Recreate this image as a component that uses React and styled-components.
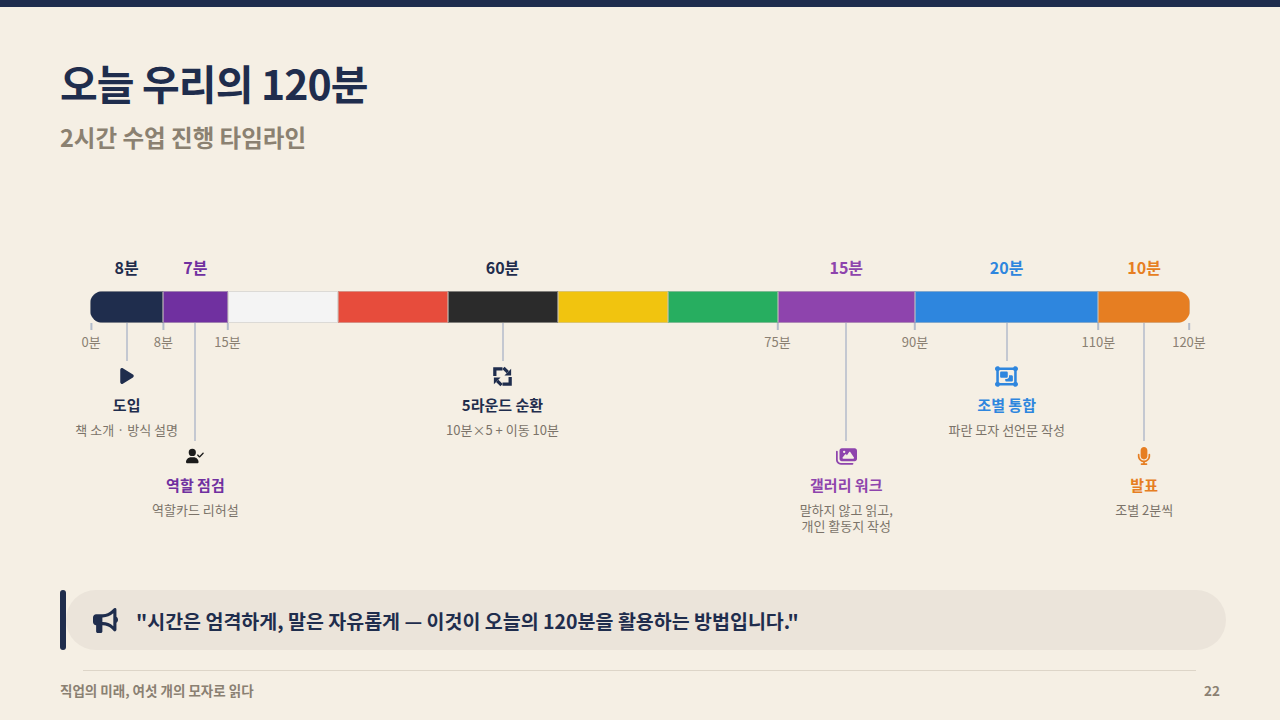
import React from 'react'
import styled, { createGlobalStyle } from 'styled-components'
import { FaPlay, FaUserCheck, FaImages, FaObjectGroup, FaMicrophone, FaBullhorn } from 'react-icons/fa6'

const NAVY = '#1f2d4d'
const MUTED = '#8a8072'
const TOTAL = 120

const GlobalStyle = createGlobalStyle`
  html, body {
    margin: 0;
    padding: 0;
    background: #f5efe4;
  }
  body {
    font-family: "Noto Sans CJK KR", "Noto Sans", sans-serif;
  }
`

const Slide = styled.div`
  width: 1280px;
  height: 720px;
  overflow: hidden;
  display: flex;
  flex-direction: column;
  background: #f5efe4;
  border-top: 7px solid ${NAVY};
  box-sizing: border-box;
`

const Header = styled.header`
  padding: 50px 60px 0;
  display: flex;
  flex-direction: column;
  gap: 14px;
`

const Title = styled.h1`
  margin: 0;
  font-size: 41px;
  line-height: 50px;
  font-weight: 700;
  letter-spacing: -0.9px;
  color: ${NAVY};
`

const Subtitle = styled.h2`
  margin: 0;
  font-size: 23.5px;
  line-height: 32px;
  font-weight: 700;
  color: #8b8171;
`

const Timeline = styled.section`
  width: 1100px;
  margin: 103px 0 0 90px;
  display: flex;
  flex-direction: column;
`

const Row = styled.div`
  display: flex;
`

const Cell = styled.div`
  flex: ${p => p.$grow} 1 0;
  min-width: 0;
  display: flex;
  flex-direction: column;
  align-items: center;
`

const DurationLabel = styled.div`
  font-size: 16px;
  line-height: 22px;
  font-weight: 700;
  color: ${p => p.$color};
  white-space: nowrap;
`

const Bar = styled.div`
  display: flex;
  height: 32px;
  margin-top: 13px;
  border-radius: 13px;
  overflow: hidden;
`

const Segment = styled.div`
  flex: ${p => p.$grow} 1 0;
  min-width: 0;
  background: ${p => p.$color};
  box-shadow: inset 0 0 0 1px rgba(200, 196, 190, 0.55);
`

const Below = styled.div`
  position: relative;
`

const Axis = styled.div`
  position: absolute;
  top: 0;
  left: 0;
  right: 0;
  height: 30px;
`

const Tick = styled.div`
  position: absolute;
  top: 0;
  transform: translateX(-50%);
  display: flex;
  flex-direction: column;
  align-items: center;
`

const TickMark = styled.div`
  width: 2px;
  height: 7px;
  background: #b3bccb;
`

const TickLabel = styled.div`
  margin-top: 4px;
  font-size: 13px;
  line-height: 16px;
  color: ${MUTED};
  white-space: nowrap;
`

const Connector = styled.div`
  width: 2px;
  height: ${p => (p.$deep ? 118 : 38)}px;
  background: #c4c8d1;
`

const IconBox = styled.div`
  height: 22px;
  margin-top: 4px;
  display: flex;
  align-items: center;
  justify-content: center;
  color: ${p => p.$color};
  font-size: ${p => p.$size}px;
`

const StopTitle = styled.div`
  margin-top: 8px;
  font-size: 15px;
  line-height: 20px;
  font-weight: 700;
  color: ${p => p.$color};
  white-space: nowrap;
`

const StopDesc = styled.div`
  margin-top: 7px;
  font-size: 13px;
  line-height: 16px;
  color: #7b7369;
  text-align: center;
  white-space: nowrap;
`

const QuoteRow = styled.div`
  display: flex;
  height: 60px;
  margin: 56px 54px 0 60px;
`

const AccentBar = styled.div`
  width: 6px;
  border-radius: 3px;
  background: ${NAVY};
`

const QuoteBox = styled.div`
  flex: 1;
  display: flex;
  align-items: center;
  gap: 18px;
  padding-left: 27px;
  border-radius: 30px;
  background: #ebe4da;
  color: ${NAVY};
`

const QuoteText = styled.p`
  margin: 0;
  font-size: 19.5px;
  font-weight: 700;
`

const Footer = styled.footer`
  margin-top: 20px;
  padding: 0 60px;
  display: flex;
  flex-direction: column;
`

const FooterRule = styled.div`
  height: 1px;
  margin: 0 24px 0 23px;
  background: #ddd5c8;
`

const FooterRow = styled.div`
  margin-top: 10px;
  display: flex;
  justify-content: space-between;
  font-size: 13.5px;
  line-height: 18px;
  font-weight: 700;
  color: ${MUTED};
`

const RotateIcon = () => (
  <svg width="23" height="23" viewBox="0 0 24 24" fill="none">
    {[0, 180].map(r => (
      <g key={r} transform={`rotate(${r} 12 12)`}>
        <path d="M4 11.5V4H12" stroke={NAVY} strokeWidth="3.4" />
        <path d="M13 3L17.5 7.5" stroke={NAVY} strokeWidth="3.4" />
        <path d="M21 11V4L14 11Z" fill={NAVY} />
      </g>
    ))}
  </svg>
)

const segments = [
  { min: 8, color: NAVY },
  { min: 7, color: '#7030a0' },
  { min: 12, color: '#f4f4f4' },
  { min: 12, color: '#e74c3c' },
  { min: 12, color: '#2b2b2b' },
  { min: 12, color: '#f1c40f' },
  { min: 12, color: '#27ae60' },
  { min: 15, color: '#8e44ad' },
  { min: 20, color: '#2e86de' },
  { min: 10, color: '#e67e22' },
]

const ticks = [0, 8, 15, 75, 90, 110, 120]

const phases = [
  { min: 8, label: '8분', color: NAVY, icon: <FaPlay />, iconColor: NAVY, size: 18, title: '도입', desc: ['책 소개 · 방식 설명'] },
  { min: 7, label: '7분', color: '#7030a0', icon: <FaUserCheck />, iconColor: '#1b1b1b', size: 18, title: '역할 점검', desc: ['역할카드 리허설'], deep: true },
  { min: 60, label: '60분', color: NAVY, icon: <RotateIcon />, iconColor: NAVY, size: 22, title: '5라운드 순환', desc: ['10분×5 + 이동 10분'] },
  { min: 15, label: '15분', color: '#8e44ad', icon: <FaImages />, iconColor: '#8e44ad', size: 21, title: '갤러리 워크', desc: ['말하지 않고 읽고,', '개인 활동지 작성'], deep: true },
  { min: 20, label: '20분', color: '#2e86de', icon: <FaObjectGroup />, iconColor: '#2e86de', size: 23, title: '조별 통합', desc: ['파란 모자 선언문 작성'] },
  { min: 10, label: '10분', color: '#e67e22', icon: <FaMicrophone />, iconColor: '#e67e22', size: 18, title: '발표', desc: ['조별 2분씩'], deep: true },
]

const App = () => {
  return (
    <>
      <GlobalStyle />
      <Slide>
        <Header>
          <Title>오늘 우리의 120분</Title>
          <Subtitle>2시간 수업 진행 타임라인</Subtitle>
        </Header>

        <Timeline>
          <Row>
            {phases.map(p => (
              <Cell key={p.title} $grow={p.min}>
                <DurationLabel $color={p.color}>{p.label}</DurationLabel>
              </Cell>
            ))}
          </Row>

          <Bar>
            {segments.map((s, i) => (
              <Segment key={i} $grow={s.min} $color={s.color} />
            ))}
          </Bar>

          <Below>
            <Axis>
              {ticks.map(t => (
                <Tick key={t} style={{ left: `calc(${(t / TOTAL) * 100}% + ${t === 0 ? 1 : t === TOTAL ? -1 : 0}px)` }}>
                  <TickMark />
                  <TickLabel>{t}분</TickLabel>
                </Tick>
              ))}
            </Axis>
            <Row>
              {phases.map(p => (
                <Cell key={p.title} $grow={p.min}>
                  <Connector $deep={p.deep} />
                  <IconBox $color={p.iconColor} $size={p.size}>{p.icon}</IconBox>
                  <StopTitle $color={p.color}>{p.title}</StopTitle>
                  <StopDesc>
                    {p.desc.map(line => <div key={line}>{line}</div>)}
                  </StopDesc>
                </Cell>
              ))}
            </Row>
          </Below>
        </Timeline>

        <QuoteRow>
          <AccentBar />
          <QuoteBox>
            <FaBullhorn size={25} />
            <QuoteText>"시간은 엄격하게, 말은 자유롭게 — 이것이 오늘의 120분을 활용하는 방법입니다."</QuoteText>
          </QuoteBox>
        </QuoteRow>

        <Footer>
          <FooterRule />
          <FooterRow>
            <span>직업의 미래, 여섯 개의 모자로 읽다</span>
            <span>22</span>
          </FooterRow>
        </Footer>
      </Slide>
    </>
  )
}

export default App
